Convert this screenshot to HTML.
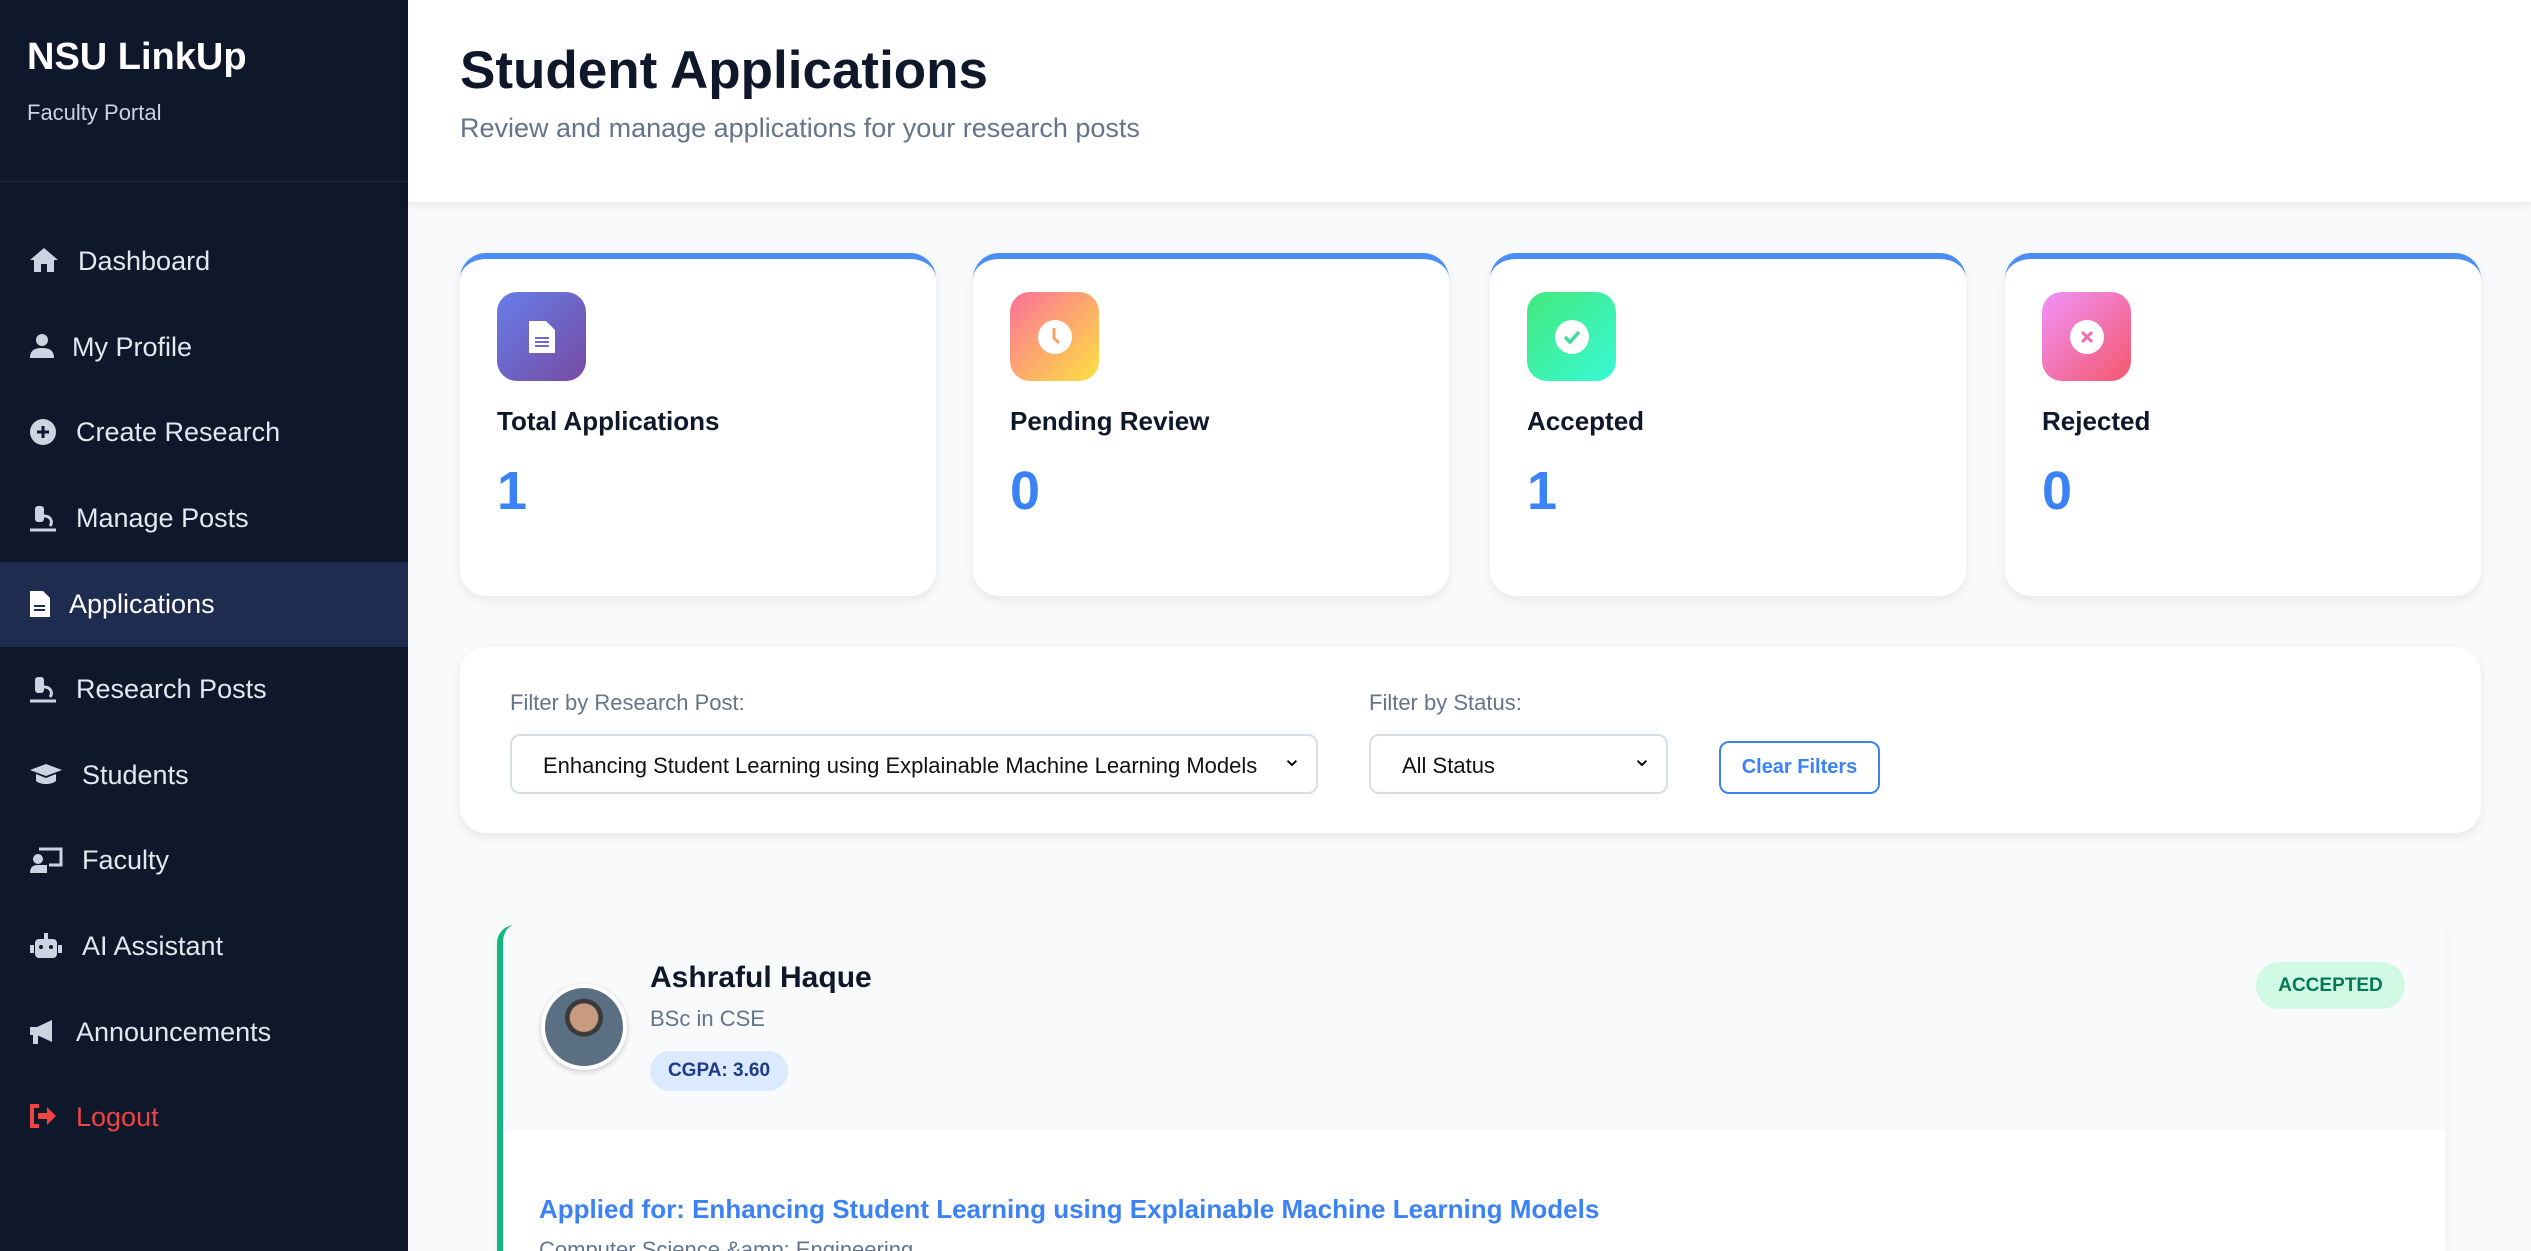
<!DOCTYPE html>
<html style="overflow:hidden;height:1251px"><head><meta charset="utf-8"><style>
*{box-sizing:border-box;margin:0;padding:0}
body{width:2531px;height:1251px;overflow:hidden;background:#f8fafc;font-family:"Liberation Sans",sans-serif;position:relative}
.sb{position:absolute;left:0;top:0;width:408px;height:1251px;background:#0f172a}
.sb h1{position:absolute;left:27px;top:36px;color:#fff;font-size:38px;font-weight:bold}
.sb .p{position:absolute;left:27px;top:100px;color:#cbd5e1;font-size:22px}
.sb .dv{position:absolute;left:0;right:0;top:181px;height:1px;background:#1e293b}
.nav{position:absolute;left:0;width:408px;height:85px;display:flex;align-items:center;color:#e2e8f0;font-size:27px}
.nav svg{position:absolute;left:29px;top:28px}
.nav span{position:absolute;left:76px;top:27px}
.nav.act{background:#1e2d4f;color:#fff}
.hd{position:absolute;left:408px;top:0;right:0;height:202px;background:#fff;box-shadow:0 3px 8px rgba(0,0,0,.08)}
.hd h2{position:absolute;left:52px;top:40px;font-size:53px;font-weight:bold;color:#0f172a}
.hd p{position:absolute;left:52px;top:113px;font-size:27px;color:#64748b}
.card{position:absolute;top:253px;width:476px;height:343px;background:#fff;border-radius:26px;border-top:6px solid #4a8df5;box-shadow:0 4px 10px rgba(0,0,0,.08)}
.ic{position:absolute;left:37px;top:33px;width:89px;height:89px;border-radius:20px;display:flex;align-items:center;justify-content:center}
.card .l{position:absolute;left:37px;top:147px;font-size:26px;font-weight:bold;color:#0f172a}
.card .n{position:absolute;left:37px;top:201px;font-size:54px;font-weight:bold;color:#3b82f6}
.flt{position:absolute;left:460px;top:647px;width:2021px;height:186px;background:#fff;border-radius:26px;box-shadow:0 4px 10px rgba(0,0,0,.08)}
.lb{position:absolute;top:43px;font-size:22px;color:#64748b}
.sel{position:absolute;top:87px;height:60px;border:2px solid #d6dde6;border-radius:10px;font-size:22px;color:#111;padding:17px 0 0 31px}
.sel:after{content:"⌄";position:absolute;right:14px;top:8px;font-size:24px}
.btn{position:absolute;left:1259px;top:94px;width:161px;height:53px;border:2px solid #3b82f6;border-radius:10px;color:#3b82f6;font-size:20px;font-weight:bold;text-align:center;line-height:49px}
.app{position:absolute;left:497px;top:925px;width:1948px;height:326px;background:#fff;border-left:6px solid #10b981;border-radius:18px 0 0 0;box-shadow:0 4px 10px rgba(0,0,0,.06);overflow:hidden}
.ah{position:absolute;left:0;top:0;right:0;height:205px;background:#f8fafc}
</style></head><body>
<div class="sb">
<h1>NSU LinkUp</h1><div class="p">Faculty Portal</div><div class="dv"></div>
<div class="nav" style="top:219px"><svg width="30" height="26" viewBox="0 0 30 26"><path d="M15 1 1 13h4v12h7v-8h6v8h7V13h4z" fill="#cbd5e1"/></svg><span style="left:78px">Dashboard</span></div>
<div class="nav" style="top:305px"><svg width="26" height="26" viewBox="0 0 26 26"><circle cx="13" cy="7" r="6" fill="#cbd5e1"/><path d="M1 25c0-8 5-10 12-10s12 2 12 10z" fill="#cbd5e1"/></svg><span style="left:72px">My Profile</span></div>
<div class="nav" style="top:390px"><svg width="28" height="28" viewBox="0 0 28 28"><circle cx="14" cy="14" r="13" fill="#cbd5e1"/><path d="M14 8v12M8 14h12" stroke="#0f172a" stroke-width="3"/></svg><span>Create Research</span></div>
<div class="nav" style="top:476px"><svg width="28" height="28" viewBox="0 0 28 28"><rect x="6" y="2" width="9" height="16" rx="3" fill="#cbd5e1"/><path d="M1 26h26M15 12c7 0 9 6 6 10" stroke="#cbd5e1" stroke-width="3" fill="none"/></svg><span>Manage Posts</span></div>
<div class="nav act" style="top:562px"><svg width="22" height="28" viewBox="0 0 22 28"><path d="M1 1h13l7 7v19H1z" fill="#fff"/><path d="M5 16h11M5 20h11" stroke="#1e2d4f" stroke-width="2"/></svg><span style="left:69px">Applications</span></div>
<div class="nav" style="top:647px"><svg width="28" height="28" viewBox="0 0 28 28"><rect x="6" y="2" width="9" height="16" rx="3" fill="#cbd5e1"/><path d="M1 26h26M15 12c7 0 9 6 6 10" stroke="#cbd5e1" stroke-width="3" fill="none"/></svg><span>Research Posts</span></div>
<div class="nav" style="top:733px"><svg width="34" height="26" viewBox="0 0 34 26"><path d="M17 3 1 9l16 6 16-6z" fill="#cbd5e1"/><path d="M7 13v7c5 4 15 4 20 0v-7l-10 4z" fill="#cbd5e1"/></svg><span style="left:82px">Students</span></div>
<div class="nav" style="top:818px"><svg width="34" height="28" viewBox="0 0 34 28"><path d="M10 3h22v16H20" stroke="#cbd5e1" stroke-width="3" fill="none"/><circle cx="9" cy="13" r="5" fill="#cbd5e1"/><path d="M1 27c0-6 3-8 8-8h9v8z" fill="#cbd5e1"/></svg><span style="left:82px">Faculty</span></div>
<div class="nav" style="top:904px"><svg width="34" height="28" viewBox="0 0 34 28"><rect x="6" y="7" width="22" height="19" rx="4" fill="#cbd5e1"/><rect x="15" y="1" width="4" height="6" fill="#cbd5e1"/><rect x="1" y="13" width="4" height="8" fill="#cbd5e1"/><rect x="29" y="13" width="4" height="8" fill="#cbd5e1"/><circle cx="12" cy="15" r="2" fill="#0f172a"/><circle cx="22" cy="15" r="2" fill="#0f172a"/></svg><span style="left:82px">AI Assistant</span></div>
<div class="nav" style="top:990px"><svg width="28" height="28" viewBox="0 0 28 28"><path d="M1 9h7l15-7v22L8 17H1z" fill="#cbd5e1"/><rect x="4" y="17" width="5" height="9" fill="#cbd5e1"/></svg><span>Announcements</span></div>
<div class="nav" style="top:1075px;color:#ef4444"><svg width="28" height="26" viewBox="0 0 28 26"><path d="M10 3H3v20h7" stroke="#ef4444" stroke-width="4" fill="none"/><path d="M9 10h9V4l9 9-9 9v-6H9z" fill="#ef4444"/></svg><span>Logout</span></div>
</div>
<div class="hd"><h2>Student Applications</h2><p>Review and manage applications for your research posts</p></div>

<div class="card" style="left:460px"><div class="ic" style="background:linear-gradient(135deg,#667eea,#764ba2)"><svg width="28" height="34" viewBox="0 0 28 34"><path d="M1 1h17l9 9v23H1z" fill="#fff"/><path d="M7 18h14M7 22h14M7 26h14" stroke="#7066d6" stroke-width="2"/></svg></div><div class="l">Total Applications</div><div class="n">1</div></div>
<div class="card" style="left:973px"><div class="ic" style="background:linear-gradient(135deg,#fa709a,#fee140)"><svg width="36" height="36" viewBox="0 0 36 36"><circle cx="18" cy="18" r="17" fill="#fff"/><path d="M17 9v10l5 5" stroke="#f7a168" stroke-width="3" fill="none"/></svg></div><div class="l">Pending Review</div><div class="n">0</div></div>
<div class="card" style="left:1490px"><div class="ic" style="background:linear-gradient(135deg,#43e97b,#38f9d7)"><svg width="36" height="36" viewBox="0 0 36 36"><circle cx="18" cy="18" r="17" fill="#fff"/><path d="M11 18l5 5 9-10" stroke="#3fdb9a" stroke-width="3.5" fill="none"/></svg></div><div class="l">Accepted</div><div class="n">1</div></div>
<div class="card" style="left:2005px"><div class="ic" style="background:linear-gradient(135deg,#f093fb,#f5576c)"><svg width="36" height="36" viewBox="0 0 36 36"><circle cx="18" cy="18" r="17" fill="#fff"/><path d="M13 13l10 10M23 13 13 23" stroke="#f26aa6" stroke-width="3"/></svg></div><div class="l">Rejected</div><div class="n">0</div></div>

<div class="flt">
<div class="lb" style="left:50px">Filter by Research Post:</div>
<div class="sel" style="left:50px;width:808px">Enhancing Student Learning using Explainable Machine Learning Models</div>
<div class="lb" style="left:909px">Filter by Status:</div>
<div class="sel" style="left:909px;width:299px">All Status</div>
<div class="btn">Clear Filters</div>
</div>

<div class="app"><div class="ah"></div>
<div style="position:absolute;left:38px;top:59px;width:86px;height:86px;border-radius:50%;border:4px solid #fff;background:radial-gradient(circle at 50% 38%,#c89a80 0 22%,#3a3a3a 24% 30%,#5b6f82 31%);box-shadow:0 2px 6px rgba(0,0,0,.2)"></div>
<div style="position:absolute;left:147px;top:36px;font-size:30px;font-weight:bold;color:#0f172a">Ashraful Haque</div>
<div style="position:absolute;left:147px;top:81px;font-size:22px;color:#64748b">BSc in CSE</div>
<div style="position:absolute;left:147px;top:126px;width:138px;height:40px;border-radius:20px;background:#dbeafe;color:#1e3a8a;font-size:19px;font-weight:bold;text-align:center;line-height:40px">CGPA: 3.60</div>
<div style="position:absolute;left:1753px;top:37px;width:149px;height:47px;border-radius:24px;background:#d1fae5;color:#047857;font-size:19px;font-weight:bold;text-align:center;line-height:47px">ACCEPTED</div>
<div style="position:absolute;left:36px;top:269px;font-size:26px;font-weight:bold;color:#3b82f6">Applied for: Enhancing Student Learning using Explainable Machine Learning Models</div>
<div style="position:absolute;left:36px;top:312px;font-size:22px;color:#64748b">Computer Science &amp;amp; Engineering</div>
</div>
</body></html>
